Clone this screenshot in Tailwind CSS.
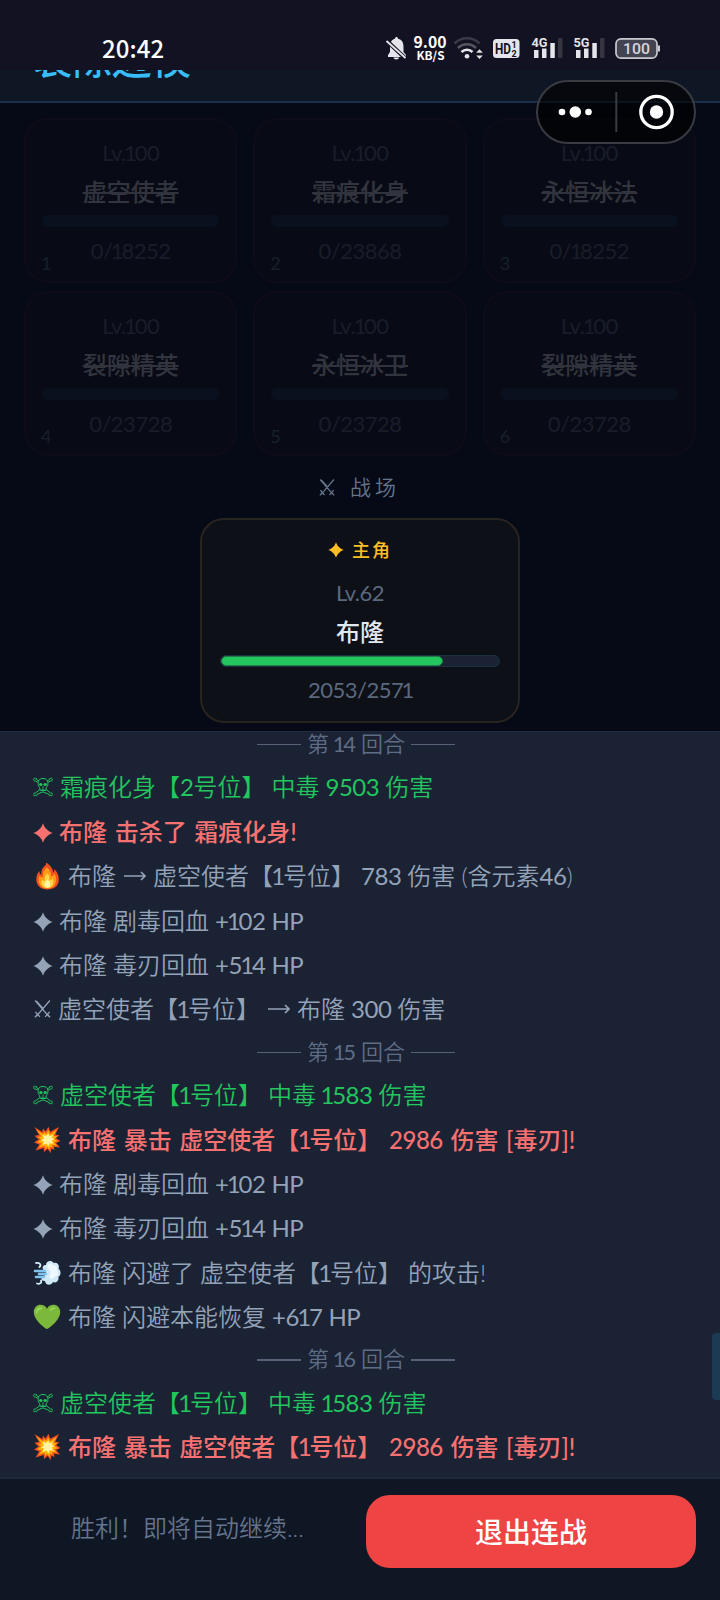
<!DOCTYPE html>
<html lang="zh-CN">
<head>
<meta charset="utf-8">
<title>裂隙连战</title>
<script src="https://cdn.jsdelivr.net/npm/@tailwindcss/browser@4"></script>
</head>
<body class="w-[720px] h-[1600px] overflow-hidden bg-[#060916] font-[Lato,'Noto_Sans_CJK_SC',sans-serif] text-[#94a3b8]">
<svg class="hidden">
  <symbol id="star" viewBox="0 0 20 20"><path fill="currentColor" d="M10 .3 C10.900 3.300 12.400 5 13.700 6.300 C15 7.600 16.700 9.100 19.700 10 C16.700 10.900 15 12.400 13.700 13.700 C12.400 15 10.900 16.700 10 19.700 C9.100 16.700 7.600 15 6.300 13.700 C5 12.400 3.300 10.900 .3 10 C3.300 9.100 5 7.600 6.300 6.300 C7.600 5 9.100 3.300 10 .3Z"/></symbol>
  <symbol id="swords" viewBox="0 0 18 20"><g fill="none" stroke="currentColor" stroke-width="1.4"><path d="M1.2 1 L15.6 17.8 M16.8 1 L2.4 17.8 M2.6 1.6 L10 10 M1.500 13 L6.2 18.4 M16.500 13 L11.8 18.4 M1 18.8 L3.5 15.8 M17 18.8 L14.5 15.8"/></g></symbol>
  <symbol id="skull" viewBox="0 0 20 22"><g fill="none" stroke="currentColor" stroke-width="1"><path d="M5.2 7.5 C5 3.8 7 2.5 10 2.5 S15 3.8 14.8 7.5 C15 9.500 14.500 10.500 13.4 11.3 L12.8 14.5 L7.2 14.5 L6.6 11.3 C5.500 10.500 5 9.500 5.2 7.5Z M9.2 12.500v2 M10.8 12.500v2"/><path d="M5 6.3 L2.5 5 C1.2 5.2.4 4.4.7 3.5 C.4 2.4 1.7 1.7 2.3 2.6 C3.2 1.9 4 2.7 3.5 3.7 L5.8 4.8 M15 6.3 L17.5 5 C18.8 5.2 19.6 4.4 19.3 3.5 C19.6 2.4 18.3 1.7 17.7 2.6 C16.8 1.9 16 2.7 16.5 3.7 L14.2 4.8 M6.900 13.500 L2.5 17 C1.2 16.7.4 17.5.8 18.5 C.5 19.7 1.8 20.3 2.5 19.5 C3.3 20.3 4.2 19.5 3.7 18.5 L10 15.8 L16.3 18.5 C15.8 19.5 16.7 20.3 17.5 19.5 C18.2 20.3 19.5 19.7 19.2 18.5 C19.6 17.5 18.8 16.7 17.5 17 L13.100 13.500"/></g><g fill="currentColor"><ellipse cx="7.8" cy="8.5" rx="1.7" ry="1.6"/><ellipse cx="12.2" cy="8.5" rx="1.7" ry="1.6"/><path d="M10 9.8 L10.9 11.5 H9.1Z"/></g></symbol>
  <symbol id="fire" viewBox="0 0 24 28"><path fill="#f4501e" d="M10.5.5 C15 3 17.5 7 17.8 10.5 C18.7 9.8 19 8.4 18.8 7 C22 10 23.5 14 23.3 18 C23 24 18.5 27.5 12 27.5 C5.3 27.5.8 23.5.8 17.5 C.8 13.5 2.2 10.8 3.8 9 C3.9 11 4.6 12.3 5.8 12.8 C5.3 8.5 7 5.5 9.5 3.8 C10.7 2.8 10.8 1.7 10.5.5Z"/><path fill="#ff9d18" d="M11.2 5.5 C15 8.3 15.8 11 15.5 14.5 C17.5 14 18.3 12.8 18.6 11.4 C20.3 13.5 21 16 20.6 18.5 C20 23.5 16.8 26.5 12 26.5 C6.8 26.5 3.3 23.2 3.2 18.5 C3.1 16.6 3.5 15 4.2 13.8 C5 15 6.3 15.6 7.8 15.2 C6.8 11 8 8.5 11.2 5.5Z"/><path fill="#ffd94a" d="M12 11.5 C14.5 14 14.2 16.5 13.5 18.5 C15.3 18.6 16.6 17.8 17.2 16.5 C18.6 20 17.5 25.8 12 26 C7 26 4.7 21.5 6.8 17.8 C7.5 19 8.7 19.2 9.6 18.5 C8.6 15.5 10 13.5 12 11.5Z"/><path fill="#fff5a8" d="M12 17.5 C15.5 20 15.6 25.5 12 25.6 C8 25.5 8.2 20.5 12 17.5Z"/></symbol>
  <symbol id="boom" viewBox="0 0 28 28"><path fill="#f4511e" d="M1.5 1 L9.2 6 L10 2.5 L12.5 5.5 L15.5.8 L17.2 5.8 L26 1 L22.3 8.5 L26.5 9.5 L23 12 L27.5 15 L23 17 L27 21.5 L21 20.8 L21.5 24 L18.5 22.5 L17.5 27 L14.7 23 L11 26 L10.5 22 L2.5 24.5 L6.2 18.5 L1 16.5 L5.5 13.5 L1.5 9.8 L6 9Z"/><path fill="#ffb300" d="M3 3 L10.3 8.4 L11 5.5 L13 8 L15.4 4 L17 8.3 L24 3.5 L20.3 9.7 L24.5 10.5 L21 12.8 L25 15.2 L20.8 16 L24 19.8 L19 18.8 L19.5 22 L17 20.4 L16.3 24 L14.3 20.8 L12.2 23.2 L11.7 19.8 L5.5 22 L8.8 17.2 L4 16.2 L8 13.3 L4.5 10.8 L8.6 10.4Z"/><path fill="#fff3a0" d="M9.5 8.5 L13 10 L15.3 7.5 L16.6 10.3 L20.5 8.5 L18.6 11.5 L21.5 13 L18.7 14.6 L20.5 17.8 L16.8 17.3 L15.2 20.5 L13.5 17.4 L9.5 19 L11 15.5 L8 14.5 L10.8 12.6Z"/></symbol>
  <symbol id="dash" viewBox="0 0 28 26"><path fill="#cfe9f7" d="M12 11 C8 9 9.5 4.5 13 5 C13 .8 18.5-.2 20.5 3 C24.5 1.5 27 5.5 25.5 8.5 C28.5 11 28 15.5 25.3 17 C26.5 20.5 23 23.5 20 22 C18.3 25.8 12.2 25.5 12 21 C7.7 21.5 7.2 16.5 11 16 L13 13.5Z"/><path fill="#eef8fd" d="M14 7 C15 3 19 2.5 20 5.5 C23.5 4.5 25 7.5 23.5 10 C26.5 12.5 25 16 22.5 15.8 C21 20 16 19 16 16 C19 14 17 9.5 14 7Z"/><g fill="none" stroke="#7fc3ee" stroke-width="2.600" stroke-linecap="round"><path d="M2 11 H12 M6 14 H13 M3 17 H11"/><path d="M3 3 C7 2.500 8.500 5 6.5 7 M4 23.500 C7 24.500 9 22.500 8 20.5" stroke="#cfeaf8" stroke-width="1.800"/></g></symbol>
  <symbol id="heart" viewBox="0 0 28 26"><path fill="#7cb83c" d="M14 25 C12.8 25 .8 16.5.8 8 C.8 3.5 4 .8 7.5.8 C10.5.8 12.8 2.3 14 4.8 C15.2 2.3 17.5.8 20.5.8 C24 .8 27.2 3.5 27.2 8 C27.2 16.5 15.2 25 14 25Z"/><path fill="#9ad458" d="M3 8 C3 4.5 5.5 3 7.8 3.2 C10 3.5 10 5 7.5 5.5 C5 6 4.5 8 4 10 C3.5 10.5 3 9.5 3 8Z M17 5.5 C18.5 3 21.5 2.8 22.5 4 C22.5 5.5 19.5 4.8 17.8 7 C17 7.5 16.6 6.5 17 5.5Z"/></symbol>
</svg>

<div class="flex h-full flex-col">
  <!-- phone status bar -->
  <div class="flex h-[70px] shrink-0 items-end bg-[#131222] pb-[4px] pl-[102px]">
    <div class="w-[283px] pb-[4px] text-[24px] leading-[28px] font-medium tracking-[0.1px] text-white font-['Noto_Sans_CJK_SC']">20:42</div>
    <svg width="290" height="40" viewBox="385 26 290 40" class="font-[Roboto,sans-serif]">
      <g fill="#e4e4ea"><path d="M388 57 L388 55 L390 52 V47 C390 42 392 39.5 395 38.8 C395 36.3 398 36.3 398 38.8 C402 39.6 403.5 42.5 403.5 47 V52 L406 55 V57Z M393.5 57.5 H399 C399 60 393.5 60 393.5 57.5Z"/></g>
      <path d="M387 41 L406 59" stroke="#131222" stroke-width="4"/><path d="M386.5 41 L405.5 58" stroke="#e4e4ea" stroke-width="1.9"/>
      <g font-family="Noto Sans CJK SC" font-weight="700" fill="#fff"><text x="413.5" y="48.2" font-size="15.5" textLength="33" lengthAdjust="spacingAndGlyphs">9.00</text><text x="416.5" y="60.4" font-size="11.5" textLength="28" lengthAdjust="spacingAndGlyphs">KB/S</text></g>
      <g fill="none" stroke-width="2.6"><path d="M454.5 43.5 C461 36.500 473 36.500 479.500 43.500" stroke="#3a3948"/><path d="M458 48 C463 43 471 43 476 48" stroke="#55545f"/><path d="M461.500 52 C464.500 49 469.500 49 472.500 52" stroke="#e4e4ea"/></g>
      <circle cx="467" cy="56.300" r="2.300" fill="#e4e4ea"/><path fill="#e4e4ea" d="M476.200 52.800 L479.500 49.300 L482.800 52.800Z M476.200 55.500 L479.500 59 L482.800 55.500Z"/>
      <rect x="493" y="39" width="26.500" height="19" rx="3.500" fill="#e4e4ea"/>
      <g fill="#131222" font-weight="700"><text x="495" y="53.700" font-size="14" textLength="16" lengthAdjust="spacingAndGlyphs">HD</text><text x="511.500" y="48" font-size="9">1</text><text x="511.500" y="56.500" font-size="9">2</text></g>
      <g fill="#e4e4ea"><text x="531.500" y="46.500" font-size="12" font-weight="700" textLength="16" lengthAdjust="spacingAndGlyphs">4G</text><rect x="534" y="50" width="4.500" height="8"/><rect x="542" y="48.500" width="4.500" height="9.500"/><rect x="550.300" y="43" width="4.500" height="15"/></g><rect x="558" y="38" width="4.500" height="20" rx="1" fill="#35343f"/>
      <g fill="#e4e4ea"><text x="573.500" y="46.500" font-size="12" font-weight="700" textLength="16" lengthAdjust="spacingAndGlyphs">5G</text><rect x="576" y="50" width="4.500" height="8"/><rect x="584" y="48.500" width="4.500" height="9.500"/><rect x="592.300" y="43" width="4.500" height="15"/></g><rect x="600" y="38" width="4.500" height="20" rx="1" fill="#35343f"/>
      <rect x="616" y="38.800" width="41" height="19.400" rx="5" fill="#444350" stroke="#c9c9d2" stroke-width="1.700"/><path d="M659 45.500 V51.500" stroke="#c9c9d2" stroke-width="2"/>
      <text x="623" y="53.800" font-size="15" font-weight="500" fill="#d6d6de" textLength="27" lengthAdjust="spacingAndGlyphs">100</text>
    </svg>
  </div>
  <!-- page header, title scrolled under the status bar -->
  <header class="flex h-[33px] shrink-0 flex-col justify-end overflow-hidden border-b-2 border-[#1c3049] bg-[#0f1624] pb-[18px] pl-[33px]">
    <h1 class="text-[39.500px] leading-[48px] font-medium text-[#38bdf8]">裂隙边模</h1>
  </header>

  <!-- battlefield -->
  <main class="flex h-[628px] shrink-0 flex-col items-center px-6 pt-[15px]">
    <div id="enemies" class="grid w-full grid-cols-3 gap-x-4 gap-y-2"></div>
    <div class="mt-[13px] flex h-[36px] items-center gap-[15px] pr-[1px] text-[21px] font-[350] tracking-[4px] text-[#64748b]"><svg class="h-[19px] w-[16px]"><use href="#swords"/></svg><span>战场</span></div>
    <div class="mt-[13px] flex h-[205px] w-[320px] flex-col items-center rounded-[24px] border-2 border-[#28241f] bg-[#0d1017] px-[18px] pt-[16px]">
      <div class="flex h-[28px] items-center gap-[8px] text-[18px] font-medium tracking-[2px] text-[#fbbf24]"><svg class="h-[16px] w-[16px]"><use href="#star"/></svg><span class="leading-[28px]">主角</span></div>
      <div data-num class="mt-[14px] h-[30px] text-[22px] leading-[30px] text-[#5b687e]">Lv.62</div>
      <div class="mt-[8px] h-[32px] text-[24px] leading-[32px] font-medium text-[#e2e8f0]">布隆</div>
      <div class="mt-[7px] h-[12px] w-full rounded-full border border-[#1b303e] bg-[#1a2234]"><div class="h-[10px] rounded-full border border-[#1f7a48] bg-[#22c55e]" style="width:80%"></div></div>
      <div data-num class="mt-[8px] text-[22px] leading-[30px] text-[#5b687e]">2053/2571</div>
    </div>
  </main>

  <!-- combat log -->
  <section class="relative h-[746px] shrink-0 overflow-hidden border-t border-[#202c41] bg-[#1a2234] px-[32px]">
    <div id="log" class="-mt-[8px]"></div>
    <div class="absolute top-[601px] right-0 h-[67px] w-[8px] rounded-l-[4px] bg-[#1c3a53]"></div>
  </section>

  <!-- action bar -->
  <footer class="flex grow border-t-2 border-[#1e2a3b] bg-[#0f1624] pt-[16px] pr-6">
    <div class="flex h-[73px] w-[366px] items-center pb-[8px] pl-[71px] text-[24px] font-[350] text-[#64748b]">胜利！即将自动继续...</div>
    <button class="h-[73px] grow rounded-[24px] bg-[#ef4444] pt-[1px] text-[28px] font-medium text-white">退出连战</button>
  </footer>
</div>

<!-- mini-program capsule -->
<div class="absolute top-[80px] left-[536px] flex h-[64px] w-[160px] items-center rounded-full border-2 border-[#393b42] bg-black/60">
  <svg class="h-full w-full" viewBox="538 82 156 60"><g fill="#fff"><circle cx="562" cy="112" r="3.300"/><circle cx="575.300" cy="112" r="5.800"/><circle cx="588.500" cy="112" r="3.300"/><circle cx="656.500" cy="112" r="6.700"/></g><circle cx="656.500" cy="112" r="15.700" fill="none" stroke="#fff" stroke-width="3.300"/><path d="M616.300 92 V132" stroke="#393b42" stroke-width="2"/></svg>
</div>

<script>
// Latin runs are set tighter than the Chinese text, with a narrow figure one
const tight = (s, w = "font-normal") => s.replace(/[A-Za-z0-9.\/+]+/g, m => `<span class="tracking-[-0.5px] ${w}">${m.replace(/1/g, '<span class="-mx-[1.700px]">1</span>')}</span>`);

const enemies = [["虚空使者","0/18252"],["霜痕化身","0/23868"],["永恒冰法","0/18252"],["裂隙精英","0/23728"],["永恒冰卫","0/23728"],["裂隙精英","0/23728"]];
document.getElementById("enemies").innerHTML = enemies.map(([n, hp], i) => `
  <div class="relative flex h-[165px] flex-col items-center rounded-[24px] border-2 border-[#0e0c18] bg-[#080b16] px-[16px] pt-[18px]">
    <div class="h-[30px] text-[22px] leading-[30px] text-[#191d29]">${tight("Lv.100")}</div>
    <div class="mt-[7px] h-[34px] text-[24px] leading-[34px] font-medium text-[#32353d] line-through decoration-[#30333b] decoration-2">${n}</div>
    <div class="mt-[6px] h-[12px] w-full rounded-full bg-[#0a111e]"></div>
    <div class="mt-[9px] text-[22px] leading-[30px] text-[#191d29]">${tight(hp)}</div>
    <div class="absolute bottom-[6px] left-[15px] text-[18px] leading-[24px] text-[#172029]">${i + 1}</div>
  </div>`).join("");
document.querySelectorAll("[data-num]").forEach(e => { e.innerHTML = "<span>" + tight(e.textContent) + "</span>"; });

const icons = {
  skull: '<svg class="mr-[7px] ml-[1px] h-[22px] w-[20px] shrink-0"><use href="#skull"/></svg>',
  star: '<svg class="mt-[2px] mr-[6px] ml-[1px] h-[20px] w-[20px] shrink-0"><use href="#star"/></svg>',
  swords: '<svg class="mr-[7px] ml-[2px] h-[20px] w-[17px] shrink-0"><use href="#swords"/></svg>',
  fire: '<svg class="mr-[8px] ml-[3px] h-[28px] w-[25px] shrink-0"><use href="#fire"/></svg>',
  boom: '<svg class="mr-[7px] ml-[1px] h-[28px] w-[28px] shrink-0"><use href="#boom"/></svg>',
  dash: '<svg class="mr-[7px] ml-[1px] h-[26px] w-[28px] shrink-0"><use href="#dash"/></svg>',
  heart: '<svg class="mr-[7px] ml-[1px] h-[26px] w-[28px] shrink-0"><use href="#heart"/></svg>',
};
const tone = {
  g: "font-[350] text-[#22c55e] [word-spacing:-0.500px]",
  r: "font-medium text-[#f87171] [word-spacing:1.600px]",
  n: "font-[350] text-[#94a3b8] [word-spacing:-0.500px]",
};
const arrow = '<svg class="mx-[7.500px] inline-block h-[10px] w-[22px] align-[4px]" viewBox="0 0 22 10"><path d="M0 5H21M17 1L21 5L17 9" fill="none" stroke="currentColor" stroke-width="1.700"/></svg>';
const log = [
  [14],
  ["skull","g","霜痕化身【2号位】 中毒 9503 伤害"],
  ["star","r","布隆 击杀了 霜痕化身!"],
  ["fire","n","布隆→虚空使者【1号位】 783 伤害 (含元素46)"],
  ["star","n","布隆 剧毒回血 +102 HP"],
  ["star","n","布隆 毒刃回血 +514 HP"],
  ["swords","n","虚空使者【1号位】→布隆 300 伤害"],
  [15],
  ["skull","g","虚空使者【1号位】 中毒 1583 伤害"],
  ["boom","r","布隆 暴击 虚空使者【1号位】 2986 伤害 [毒刃]!"],
  ["star","n","布隆 剧毒回血 +102 HP"],
  ["star","n","布隆 毒刃回血 +514 HP"],
  ["dash","n","布隆 闪避了 虚空使者【1号位】 的攻击!"],
  ["heart","n","布隆 闪避本能恢复 +617 HP"],
  [16],
  ["skull","g","虚空使者【1号位】 中毒 1583 伤害"],
  ["boom","r","布隆 暴击 虚空使者【1号位】 2986 伤害 [毒刃]!"],
];
document.getElementById("log").innerHTML = log.map(([a, t, s]) => typeof a === "number"
  ? `<div class="flex h-[41.3px] items-center justify-center gap-[5.500px] pr-[8px] text-[22px] font-[350] text-[#5f6d84]"><i class="h-[1.500px] w-[44px] bg-[#56637a]"></i><span class="-mt-[2px] [word-spacing:-0.500px]">第 ${tight(String(a))} 回合</span><i class="h-[1.500px] w-[44px] bg-[#56637a]"></i></div>`
  : `<div class="flex h-[44.4px] items-center text-[24px] leading-[36px] whitespace-pre ${tone[t]}">${icons[a]}<span>${tight(s, t === "r" ? "font-medium" : "font-normal").replace("→", arrow)}</span></div>`).join("");
</script>
</body>
</html>
